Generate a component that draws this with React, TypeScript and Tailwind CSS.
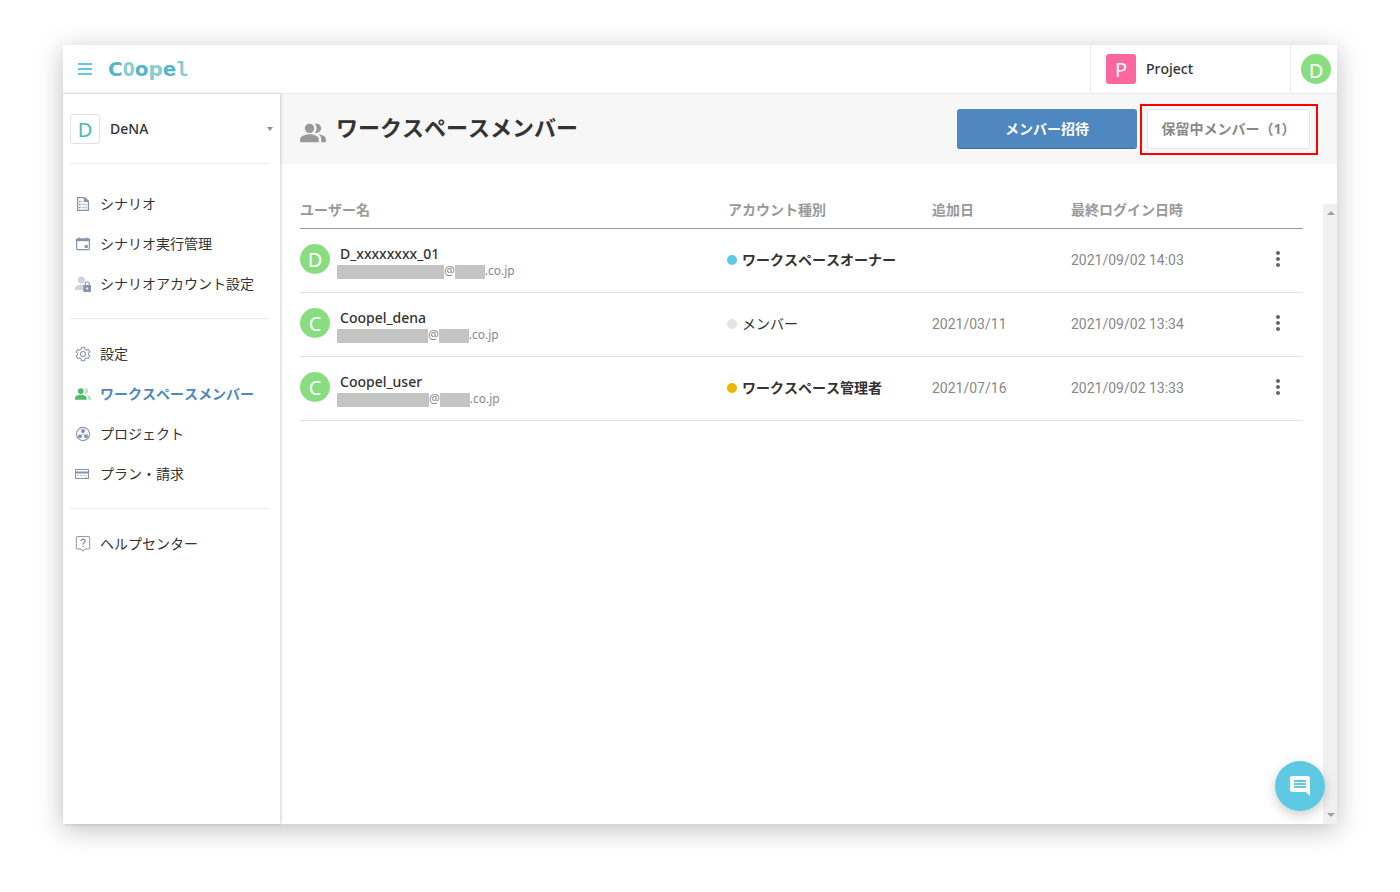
import type { ReactNode } from "react";
import { MdComment, MdMoreVert, MdPeopleAlt } from "react-icons/md";

type NavItem = {
  label: string;
  icon: ReactNode;
  active?: boolean;
};

type Member = {
  initial: string;
  name: string;
  maskWidth: string;
  role: string;
  dot: string;
  strong: boolean;
  added: string;
  lastLogin: string;
};

function ScenarioIcon() {
  return (
    <svg width="16" height="16" viewBox="0 0 16 16" fill="none">
      <path d="M2.6 1.6h7.2l3.6 3.6v9.2H2.6z" stroke="#8794ad" strokeWidth="1.3" strokeLinejoin="round" />
      <path d="M9 1.2v4.8h4.800z" fill="#8794ad" />
      <path d="M4 5.5h1.6M4 8.5h1.6M4 11.5h1.6" stroke="#8794ad" strokeWidth="1.5" />
      <path d="M6.4 5.5h2M6.4 8.5H12M6.4 11.5H12" stroke="#c3cad8" strokeWidth="1.5" />
    </svg>
  );
}

function CalendarIcon() {
  return (
    <svg width="16" height="16" viewBox="0 0 16 16" fill="none">
      <rect x="1.6" y="3.2" width="12.8" height="10.4" rx="1" stroke="#8794ad" strokeWidth="1.2" />
      <path d="M1 2.6h14v2.600H1z" fill="#8794ad" />
      <path d="M4.5 1.6v1.6M11.5 1.6v1.6" stroke="#8794ad" strokeWidth="1.4" />
      <rect x="9.8" y="9" width="3" height="3" fill="#8794ad" />
    </svg>
  );
}

function AccountLockIcon() {
  return (
    <svg width="16" height="16" viewBox="0 0 16 16" fill="none">
      <circle cx="6.4" cy="4" r="3.6" fill="#ced3df" />
      <path d="M0 14v-2.2C0 9.8 3.8 8.8 6.4 8.8c.9 0 1.7.1 2.4.3L8 14z" fill="#ced3df" />
      <rect x="8.3" y="9" width="7.7" height="7" rx=".8" fill="#8794ad" />
      <path d="M10.2 9.4V7.8a2 2 0 0 1 4 0v1.6" stroke="#8794ad" strokeWidth="1.1" />
      <circle cx="12.2" cy="12.5" r="1" fill="#fff" />
    </svg>
  );
}

function GearIcon() {
  return (
    <svg width="16" height="16" viewBox="0 0 24 24" fill="none" stroke="#8794ad" strokeWidth="1.6" strokeLinejoin="round">
      <path d="M9.6 2h4.8l.6 3 2 1.2 3-1 2.3 4-2.3 2v1.6l2.3 2-2.3 4-3-1L15 19l-.6 3H9.6L9 19l-2-1.2-3 1-2.3-4 2.3-2v-1.6l-2.3-2 2.3-4 3 1L9 5z" />
      <circle cx="12" cy="12" r="3.8" />
    </svg>
  );
}

function MembersIcon() {
  return (
    <svg width="16" height="16" viewBox="1 1 22 22">
      <circle cx="9" cy="8" r="4" fill="#4dbb6c" />
      <path d="M9 13c-2.7 0-8 1.34-8 4v3h16v-3c0-2.66-5.33-4-8-4z" fill="#4dbb6c" />
      <path d="M15 12a4 4 0 0 0 0-8c-.47 0-.91.1-1.33.24a5.98 5.98 0 0 1 0 7.52c.42.14.86.24 1.33.24zM16.67 13.13C18.04 14.06 19 15.32 19 17v3h4v-3c0-2.18-3.57-3.47-6.33-3.87z" fill="#b8e4c4" />
    </svg>
  );
}

function ProjectIcon() {
  return (
    <svg width="16" height="16" viewBox="0 0 16 16" fill="none">
      <circle cx="8" cy="8" r="6.6" stroke="#8794ad" strokeWidth="1.1" />
      <path d="M8 5.2v3L5 10.5M8 8.2l3 2.3" stroke="#c3cad8" strokeWidth="1" />
      <circle cx="8" cy="5" r="2" fill="#8794ad" />
      <circle cx="5" cy="10.2" r="2" fill="#8794ad" />
      <circle cx="11" cy="10.2" r="2" fill="#8794ad" />
    </svg>
  );
}

function CardIcon() {
  return (
    <svg width="16" height="16" viewBox="0 0 16 16" fill="none">
      <rect x=".5" y="3.5" width="13" height="9" stroke="#8794ad" />
      <path d="M1 6.5h12" stroke="#8794ad" strokeWidth="2" />
      <path d="M2 9.5h10" stroke="#c3cad8" strokeDasharray="2 1" />
      <path d="M10 11.5h2" stroke="#c3cad8" />
    </svg>
  );
}

function HelpIcon() {
  return (
    <svg width="16" height="16" viewBox="0 0 16 16" fill="none" stroke="#8794ad">
      <path d="M2 .6h12a.7.7 0 0 1 .7.7v11a.7.7 0 0 1-.7.7h-4L8 15.2 6 13H2a.7.7 0 0 1-.7-.7v-11A.7.7 0 0 1 2 .6z" />
      <path d="M5.9 5.2c0-1.3.9-2 2.1-2s2.1.7 2.1 1.9c0 1.6-2 1.6-2 3.4M8.1 9.7v1.4" strokeWidth="1.4" />
    </svg>
  );
}

const navGroups: NavItem[][] = [
  [
    { label: "シナリオ", icon: <ScenarioIcon /> },
    { label: "シナリオ実行管理", icon: <CalendarIcon /> },
    { label: "シナリオアカウント設定", icon: <AccountLockIcon /> },
  ],
  [
    { label: "設定", icon: <GearIcon /> },
    { label: "ワークスペースメンバー", icon: <MembersIcon />, active: true },
    { label: "プロジェクト", icon: <ProjectIcon /> },
    { label: "プラン・請求", icon: <CardIcon /> },
  ],
  [{ label: "ヘルプセンター", icon: <HelpIcon /> }],
];

const members: Member[] = [
  {
    initial: "D",
    name: "D_xxxxxxxx_01",
    maskWidth: "w-[107px]",
    role: "ワークスペースオーナー",
    dot: "bg-[#5ec9e2]",
    strong: true,
    added: "",
    lastLogin: "2021/09/02 14:03",
  },
  {
    initial: "C",
    name: "Coopel_dena",
    maskWidth: "w-[91px]",
    role: "メンバー",
    dot: "bg-[#e4e4e4]",
    strong: false,
    added: "2021/03/11",
    lastLogin: "2021/09/02 13:34",
  },
  {
    initial: "C",
    name: "Coopel_user",
    maskWidth: "w-[92px]",
    role: "ワークスペース管理者",
    dot: "bg-[#edb700]",
    strong: true,
    added: "2021/07/16",
    lastLogin: "2021/09/02 13:33",
  },
];

function Avatar({ initial }: { initial: string }) {
  return (
    <span className="flex size-[30px] shrink-0 items-center justify-center rounded-full bg-[#89dd81] pt-[3px] text-xl leading-none text-white">
      {initial}
    </span>
  );
}

function Logo() {
  return (
    <a
      href="#"
      className="flex items-baseline font-['DejaVu_Sans',sans-serif] text-xl leading-none font-bold text-[#57b5cb]"
    >
      <span>C</span>
      <span className="font-['DejaVu_Sans_Mono',monospace] text-[#86cdd2]">O</span>
      <span>o</span>
      <span className="text-[#86cdd2]">p</span>
      <span>e</span>
      <span className="font-['DejaVu_Sans_Mono',monospace] text-[#86cdd2]">l</span>
    </a>
  );
}

function Header() {
  return (
    <header className="flex h-[49px] shrink-0 items-stretch border-b border-[#ebebeb]">
      <div className="flex flex-1 items-center gap-4 pl-[15px]">
        <button type="button" aria-label="メニュー" className="flex w-3.5 flex-col gap-[3px]">
          <span className="h-0.5 bg-[#5ec9e2]" />
          <span className="h-0.5 bg-[#5ec9e2]" />
          <span className="h-0.5 bg-[#5ec9e2]" />
        </button>
        <Logo />
      </div>
      <button type="button" className="flex w-[200px] items-center gap-2.5 border-l border-[#ebebeb] pl-[15px]">
        <span className="flex size-[30px] items-center justify-center rounded-[3px] bg-[#ff669d] pt-0.5 text-xl leading-none text-white">
          P
        </span>
        <span className="font-medium">Project</span>
      </button>
      <button type="button" aria-label="アカウント" className="flex w-[47px] items-center border-l border-[#ebebeb] pl-2.5">
        <Avatar initial="D" />
      </button>
    </header>
  );
}

function Sidebar() {
  return (
    <aside className="z-10 w-[217px] shrink-0 bg-white pr-2.5 pl-[7px] shadow-[1px_0_3px_rgba(0,0,0,0.18)]">
      <button type="button" className="flex h-[70px] w-full items-center gap-2.5 border-b border-[#ebebeb]">
        <span className="flex size-[30px] items-center justify-center rounded-[3px] border border-[#e2e2e2] pt-0.5 text-xl leading-none text-[#4bb9b9]">
          D
        </span>
        <span className="font-medium">DeNA</span>
        <svg width="6" height="4" viewBox="0 0 6 4" className="-mr-[3px] ml-auto" fill="#8f8f8f">
          <path d="M0 0h6L3 4z" />
        </svg>
      </button>
      <nav className="pt-5">
        {navGroups.map((group, index) => (
          <ul key={index} className={index > 0 ? "mt-3.5 border-t border-[#ebebeb] pt-[15px]" : ""}>
            {group.map((item) => (
              <li key={item.label}>
                <a
                  href="#"
                  className={
                    item.active
                      ? "flex h-10 items-center gap-[9px] pl-[5px] font-bold whitespace-nowrap text-[#4f87c1]"
                      : "flex h-10 items-center gap-[9px] pl-[5px] whitespace-nowrap"
                  }
                >
                  {item.icon}
                  {item.label}
                </a>
              </li>
            ))}
          </ul>
        ))}
      </nav>
    </aside>
  );
}

function TitleBar() {
  return (
    <div className="flex h-[70px] items-center bg-[#f7f7f7] pr-[19px] pl-5">
      <div className="flex flex-1 items-end gap-[9px]">
        <MdPeopleAlt className="-ml-px size-7 text-[#999999]" />
        <h1 className="pb-1 text-[22px] leading-8 font-bold">ワークスペースメンバー</h1>
      </div>
      <button
        type="button"
        className="h-10 w-[180px] rounded-[3px] border-b border-[#3a6b9c] bg-[#4f87c1] font-bold text-white"
      >
        メンバー招待
      </button>
      <div className="ml-[3px] border-2 border-[#ff0000] pt-[3px] pr-1.5 pb-1 pl-[5px]">
        <button
          type="button"
          className="h-10 w-[163px] rounded-[3px] border border-[#e4e4e4] bg-white font-bold whitespace-nowrap text-[#888888]"
        >
          保留中メンバー（1）
        </button>
      </div>
    </div>
  );
}

function MemberRow({ member }: { member: Member }) {
  return (
    <tr className="h-16 border-b border-[#e2e2e2]">
      <td className="pt-[15px] align-top">
        <div className="flex items-start">
          <Avatar initial={member.initial} />
          <div className="ml-[7px]">
            <div className="pl-[3px] leading-[19px] font-medium">{member.name}</div>
            <div className="mt-0.5 flex h-3.5 items-start text-xs leading-none text-[#888888]">
              <span className={`h-3.5 bg-[#c4c4c4] ${member.maskWidth}`} />
              <span>@</span>
              <span className="h-3.5 w-[30px] bg-[#c4c4c4]" />
              <span>.co.jp</span>
            </div>
          </div>
        </div>
      </td>
      <td>
        <span className="flex items-center gap-[5px]">
          <span className={`-ml-px size-2.5 rounded-full ${member.dot}`} />
          <span className={member.strong ? "font-bold" : ""}>{member.role}</span>
        </span>
      </td>
      <td className="font-[Roboto,sans-serif] text-[#888888]">{member.added}</td>
      <td className="font-[Roboto,sans-serif] text-[#888888]">{member.lastLogin}</td>
      <td className="pb-0.5">
        <button type="button" aria-label={`${member.name}の操作`} className="mr-[13px] ml-auto block">
          <MdMoreVert className="size-6 text-[#666666]" />
        </button>
      </td>
    </tr>
  );
}

function MemberTable() {
  return (
    <table className="w-full table-fixed border-collapse text-left">
      <thead>
        <tr className="h-[35px] border-b border-[#999999] text-[#999999]">
          <th>ユーザー名</th>
          <th className="w-[204px]">アカウント種別</th>
          <th className="w-[139px]">追加日</th>
          <th className="w-[162px]">最終ログイン日時</th>
          <th className="w-[70px]" aria-label="操作" />
        </tr>
      </thead>
      <tbody>
        {members.map((member) => (
          <MemberRow key={member.name} member={member} />
        ))}
      </tbody>
    </table>
  );
}

function ScrollTrack() {
  return (
    <div className="mt-10 flex w-3.5 shrink-0 flex-col items-end justify-between bg-[#f0f0f0] py-[7px] pr-0.5">
      <svg width="8" height="4" viewBox="0 0 8 4" fill="#a0a0a0">
        <path d="M4 0l4 4H0z" />
      </svg>
      <svg width="8" height="4" viewBox="0 0 8 4" fill="#a0a0a0">
        <path d="M0 0h8L4 4z" />
      </svg>
    </div>
  );
}

export default function App() {
  return (
    <div className="flex min-h-screen bg-white px-[63px] pt-[45px] pb-[68px] font-['Noto_Sans','Noto_Sans_CJK_JP',sans-serif] text-sm text-[#333333] [font-kerning:none]">
      <div className="relative flex min-w-0 flex-1 flex-col bg-white shadow-[0_5px_24px_rgba(0,0,0,0.25)]">
        <Header />
        <div className="flex flex-1">
          <Sidebar />
          <main className="flex min-w-0 flex-1 flex-col">
            <TitleBar />
            <div className="flex flex-1">
              <div className="min-w-0 flex-1 px-5 pt-[29px]">
                <MemberTable />
              </div>
              <ScrollTrack />
            </div>
          </main>
        </div>
        <button
          type="button"
          aria-label="チャット"
          className="absolute right-3 bottom-[13px] z-20 flex size-[50px] items-center justify-center rounded-full bg-[#5ec9e2] shadow-[0_4px_12px_rgba(0,0,0,0.2)]"
        >
          <MdComment className="size-6 text-white" />
        </button>
      </div>
    </div>
  );
}
